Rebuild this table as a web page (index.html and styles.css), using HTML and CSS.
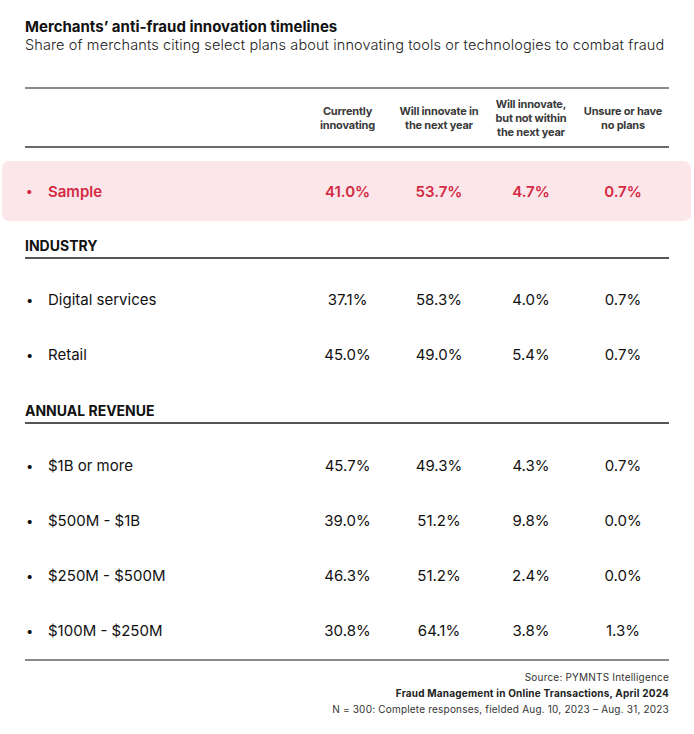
FILE: index.html
```html
<!DOCTYPE html>
<html lang="en">
<head>
<meta charset="utf-8">
<title>Merchants’ anti-fraud innovation timelines</title>
<link rel="stylesheet" href="styles.css">
</head>
<body>
<div class="page">
  <h1 class="title">Merchants’ anti-fraud innovation timelines</h1>
  <p class="subtitle">Share of merchants citing select plans about innovating tools or technologies to combat fraud</p>

  <div class="head-row">
    <div></div>
    <div class="col-head">Currently<br>innovating</div>
    <div class="col-head">Will innovate in<br>the next year</div>
    <div class="col-head">Will innovate,<br>but not within<br>the next year</div>
    <div class="col-head">Unsure or have<br>no plans</div>
  </div>

  <div class="row highlight">
    <div class="label"><span class="dot">•</span>Sample</div>
    <div class="val">41.0%</div>
    <div class="val">53.7%</div>
    <div class="val">4.7%</div>
    <div class="val">0.7%</div>
  </div>

  <div class="section industry">INDUSTRY</div>
  <div class="rows rows-industry">
    <div class="row">
      <div class="label"><span class="dot">•</span>Digital services</div>
      <div class="val">37.1%</div><div class="val">58.3%</div><div class="val">4.0%</div><div class="val">0.7%</div>
    </div>
    <div class="row">
      <div class="label"><span class="dot">•</span>Retail</div>
      <div class="val">45.0%</div><div class="val">49.0%</div><div class="val">5.4%</div><div class="val">0.7%</div>
    </div>
  </div>

  <div class="section revenue">ANNUAL REVENUE</div>
  <div class="rows">
    <div class="row">
      <div class="label"><span class="dot">•</span>$1B or more</div>
      <div class="val">45.7%</div><div class="val">49.3%</div><div class="val">4.3%</div><div class="val">0.7%</div>
    </div>
    <div class="row">
      <div class="label"><span class="dot">•</span>$500M - $1B</div>
      <div class="val">39.0%</div><div class="val">51.2%</div><div class="val">9.8%</div><div class="val">0.0%</div>
    </div>
    <div class="row">
      <div class="label"><span class="dot">•</span>$250M - $500M</div>
      <div class="val">46.3%</div><div class="val">51.2%</div><div class="val">2.4%</div><div class="val">0.0%</div>
    </div>
    <div class="row">
      <div class="label"><span class="dot">•</span>$100M - $250M</div>
      <div class="val">30.8%</div><div class="val">64.1%</div><div class="val">3.8%</div><div class="val">1.3%</div>
    </div>
  </div>

  <div class="footer">
    <p class="src">Source: PYMNTS Intelligence</p>
    <p class="report">Fraud Management in Online Transactions, April 2024</p>
    <p class="note">N = 300: Complete responses, fielded Aug. 10, 2023 – Aug. 31, 2023</p>
  </div>
</div>
</body>
</html>
```

FILE: styles.css
```css
* { box-sizing: border-box; }
html, body { margin: 0; padding: 0; background: #ffffff; }
body { font-family: Inter, "Liberation Sans", sans-serif; color: #1a1a1a; }

.page {
  width: 644px;
  margin-left: 25px;
  padding-top: 18px;
}

.title {
  margin: 0;
  font-size: 15px;
  line-height: 18px;
  font-weight: 700;
  letter-spacing: 0;
  color: #111;
}
.subtitle {
  margin: 0;
  font-size: 14.5px;
  line-height: 18px;
  font-weight: 300;
  letter-spacing: 0.12px;
  white-space: nowrap;
  color: #222;
}

.head-row,
.row {
  display: grid;
  grid-template-columns: 1fr 91px 92px 92px 92px;
  align-items: center;
}

.head-row {
  margin-top: 33px;
  height: 61px;
  border-top: 2px solid #8a8a8a;
  border-bottom: 2px solid #6a6a6a;
}
.col-head {
  text-align: center;
  font-size: 11px;
  line-height: 14px;
  font-weight: 700;
  color: #3a3a3a;
  letter-spacing: -0.2px;
}

.row {
  height: 55px;
  font-size: 15px;
}
.label {
  display: flex;
  align-items: center;
  color: #111;
}
.dot {
  width: 23px;
  padding-left: 1px;
  font-size: 13px;
}
.val {
  text-align: center;
  color: #111;
}

.highlight {
  margin: 13px -22px 0 -23px;
  padding: 0 22px 0 23px;
  height: 60px;
  background: #fbe6ea;
  border-radius: 7px;
  font-weight: 600;
}
.highlight .label,
.highlight .val { color: #d42a43; }

.section {
  font-size: 14px;
  line-height: 18px;
  font-weight: 700;
  color: #111;
  padding-bottom: 2px;
  border-bottom: 2px solid #555;
}
.industry { margin-top: 16px; }
.revenue { margin-top: 20px; }

.rows { margin-top: 14px; }
.rows-industry { margin-top: 13px; }

.footer {
  margin-top: 1px;
  border-top: 2px solid #8a8a8a;
  padding-top: 8px;
  text-align: right;
}
.footer p {
  margin: 0;
  font-size: 10px;
  line-height: 16px;
  letter-spacing: 0.2px;
  color: #333;
}
.footer .report { font-weight: 700; color: #222; }
```
